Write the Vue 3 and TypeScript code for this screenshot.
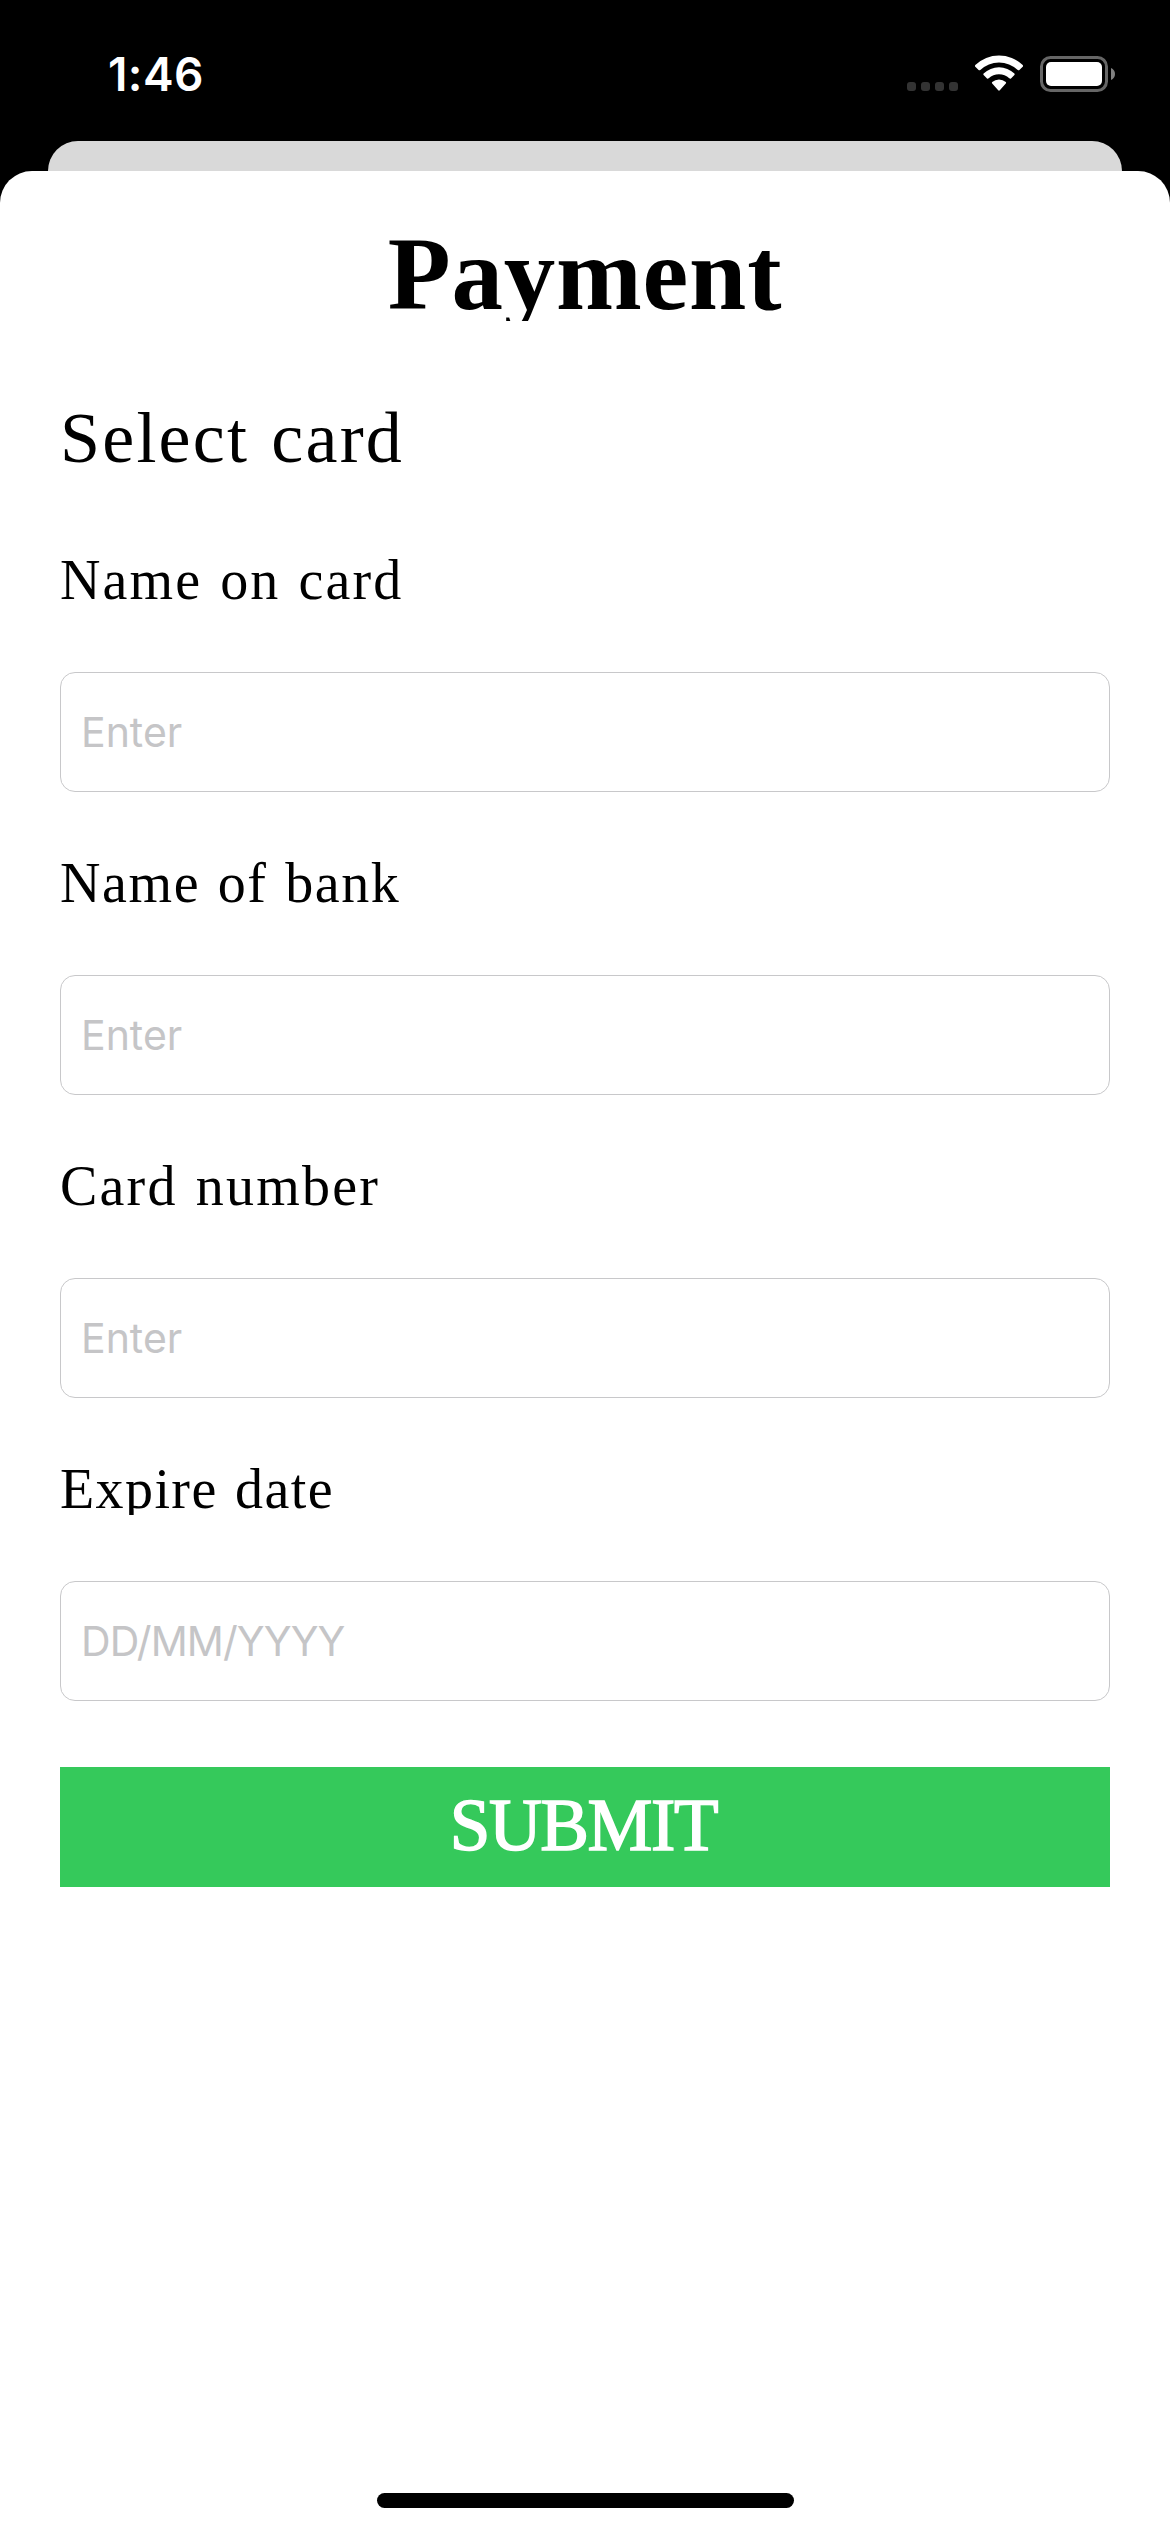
<script setup lang="ts">
import { reactive } from 'vue'

interface Field {
  id: string
  label: string
  placeholder: string
  tracking: number
}

const fields: Field[] = [
  { id: 'holder', label: 'Name on card', placeholder: 'Enter', tracking: 2.1 },
  { id: 'bank', label: 'Name of bank', placeholder: 'Enter', tracking: 1.6 },
  { id: 'number', label: 'Card number', placeholder: 'Enter', tracking: 2.2 },
  { id: 'expiry', label: 'Expire date', placeholder: 'DD/MM/YYYY', tracking: 1.4 },
]

const values = reactive<Record<string, string>>({ holder: '', bank: '', number: '', expiry: '' })
</script>

<template>
  <div class="screen">
    <header class="status">
      <span class="time">1:46</span>
      <svg class="indicators" width="212" height="44" viewBox="0 0 212 44">
        <g fill="#333">
          <rect x="7" y="30" width="9" height="9" rx="3" />
          <rect x="21" y="30" width="9" height="9" rx="3" />
          <rect x="35" y="30" width="9" height="9" rx="3" />
          <rect x="49" y="30" width="9" height="9" rx="3" />
        </g>
        <g fill="#fff">
          <path d="M75.3 13.1Q74.6 14 75.3 14.7L78.6 18Q79.4 18.7 80.3 17.9A27.2 27.2 0 0 1 117.7 17.9Q118.6 18.7 119.4 18L122.7 14.7Q123.4 14 122.7 13.1A34.2 34.2 0 0 0 75.3 13.1Z" />
          <path d="M83.6 21.5Q82.9 22.3 83.6 23L87 26.4Q87.8 27.1 88.7 26.3A15.2 15.2 0 0 1 109.3 26.3Q110.2 27.1 111 26.4L114.4 23Q115.1 22.3 114.4 21.5A22.2 22.2 0 0 0 83.6 21.5Z" />
          <path d="M92.2 30.1Q91.5 30.9 92.2 31.6L98.2 38.3Q99 39.1 99.8 38.3L105.8 31.6Q106.5 30.9 105.8 30.1A10.4 10.4 0 0 0 92.2 30.1Z" />
        </g>
        <rect x="141.5" y="5.5" width="65" height="33" rx="9" fill="none" stroke="#666" stroke-width="3" />
        <rect x="146" y="10" width="56" height="24" rx="5" fill="#fff" />
      </svg>
      <svg class="nub" width="4" height="12" viewBox="0 0 4 12">
        <path d="M0 0Q4 1.8 4 6Q4 10.2 0 12Z" fill="#808080" />
      </svg>
    </header>
    <div class="back-sheet"></div>
    <main class="sheet">
      <h1 class="title">Payment</h1>
      <h2 class="subtitle">Select card</h2>
      <form class="form" @submit.prevent>
        <div v-for="field in fields" :key="field.id" class="field">
          <label class="label" :for="field.id" :style="{ letterSpacing: field.tracking + 'px' }">{{ field.label }}</label>
          <input :id="field.id" v-model="values[field.id]" class="input" type="text" :placeholder="field.placeholder" />
        </div>
        <button class="submit" type="submit">SUBMIT</button>
      </form>
      <div class="home"></div>
    </main>
  </div>
</template>

<style>
body {
  margin: 0;
  background: #000;
}
</style>

<style scoped>
.screen {
  display: flex;
  flex-direction: column;
  width: 1170px;
  height: 2532px;
  overflow: hidden;
  background: #000;
  font-family: "Liberation Serif", serif;
  color: #000;
}
.status {
  display: flex;
  height: 141px;
  box-sizing: border-box;
  padding: 51px 55px 0 108px;
}
.time {
  flex: 1;
  font: 600 46px/46px Inter, sans-serif;
  letter-spacing: 0.4px;
  color: #fff;
}
.indicators {
  flex: none;
  margin-top: 1px;
  margin-right: -1px;
}
.nub {
  flex: none;
  margin-top: 17px;
}
.back-sheet {
  flex: none;
  height: 30px;
  margin: 0 48px;
  border-radius: 30px 30px 0 0;
  background: #d9d9d9;
}
.sheet {
  flex: 1;
  display: flex;
  flex-direction: column;
  padding: 46px 60px 24px;
  border-radius: 32px 32px 0 0;
  background: #fff;
}
.title {
  height: 116px;
  margin: 0;
  clip-path: inset(0 0 12px);
  font-size: 103px;
  line-height: 115px;
  font-weight: 700;
  letter-spacing: 0.8px;
  text-align: center;
}
.subtitle {
  height: 82px;
  margin: 64px 0 70px;
  font-size: 72px;
  line-height: 82px;
  font-weight: 400;
  letter-spacing: 2.2px;
  word-spacing: 2px;
}
.form {
  display: flex;
  flex-direction: column;
}
.field {
  display: flex;
  flex-direction: column;
  height: 303px;
}
.label {
  height: 64px;
  margin-bottom: 59px;
  clip-path: inset(0 0 7px);
  font-size: 56px;
  line-height: 62px;
  word-spacing: 2px;
}
.input {
  height: 120px;
  box-sizing: border-box;
  padding: 0 20px;
  border: 1px solid #c8c8ca;
  border-radius: 15px;
  outline: 0;
  background: #fff;
  font: 400 41px Inter, sans-serif;
}
.input::placeholder {
  color: #c5c5c7;
  opacity: 1;
}
.input[placeholder*="/"] {
  letter-spacing: -0.9px;
}
.submit {
  height: 120px;
  margin-top: 6px;
  padding: 0 3px 3px 0;
  border: 0;
  background: #35c95b;
  color: #fff;
  font: 400 73px/117px "Liberation Serif", serif;
  letter-spacing: -1.4px;
  -webkit-text-stroke: 1.6px #fff;
}
.home {
  width: 417px;
  height: 15px;
  margin: auto auto 0;
  border-radius: 8px;
  background: #000;
}
</style>
